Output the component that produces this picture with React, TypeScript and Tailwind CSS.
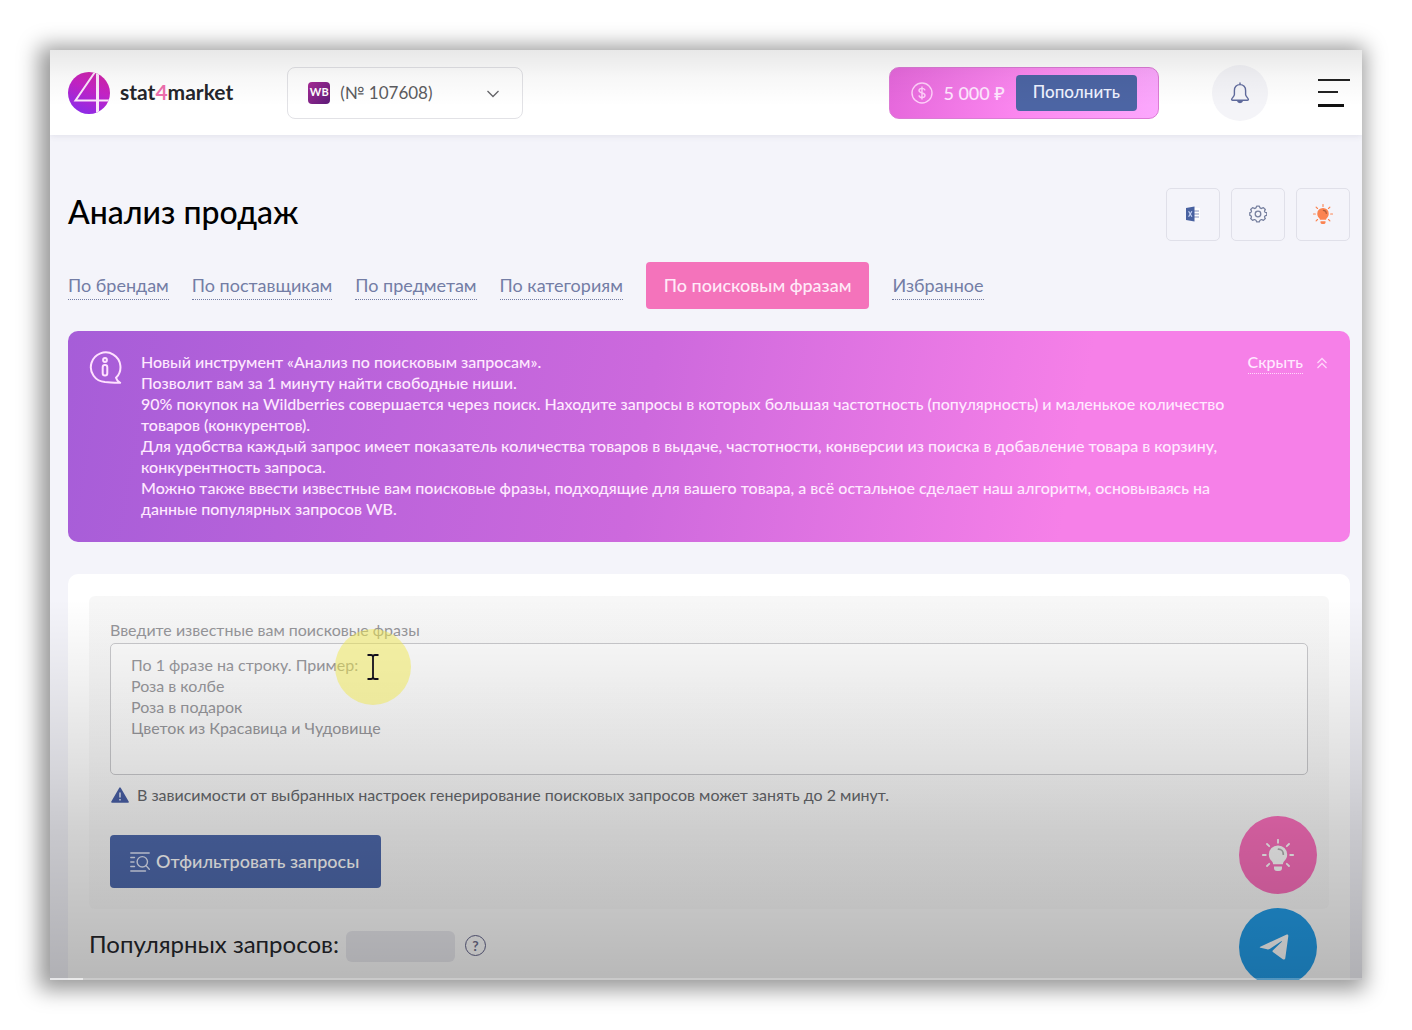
import React from "react";

const tabs = [
  { label: "По брендам" },
  { label: "По поставщикам" },
  { label: "По предметам" },
  { label: "По категориям" },
  { label: "По поисковым фразам", active: true },
  { label: "Избранное" },
];

function Logo() {
  return (
    <svg viewBox="0 0 42 42" className="size-[42px] shrink-0" aria-hidden="true">
      <defs>
        <linearGradient id="logo-fill" x1="0.3" y1="1" x2="0.7" y2="0">
          <stop offset="0" stopColor="#8a2be8" />
          <stop offset="0.6" stopColor="#c423c6" />
          <stop offset="1" stopColor="#cf25a8" />
        </linearGradient>
        <clipPath id="logo-clip">
          <circle cx="21" cy="21" r="21" />
        </clipPath>
      </defs>
      <circle cx="21" cy="21" r="21" fill="url(#logo-fill)" />
      <g clipPath="url(#logo-clip)" fill="none" stroke="#fbe6fb" strokeWidth="2">
        <path d="M42 28.500H7.500L27 0" />
        <path d="M29.500 0v42" strokeWidth="3" />
      </g>
    </svg>
  );
}

function BulbIcon({ className }: { className: string }) {
  return (
    <svg viewBox="0 0 32 32" className={className} aria-hidden="true">
      <path
        d="M16 6.4a9 9 0 0 1 9.200 9c0 3.600-1.800 5.400-3.300 7.200-.700.900-.900 1.700-1 2.700h-9.800c-.1-1-.3-1.800-1-2.700-1.500-1.800-3.300-3.600-3.300-7.200a9 9 0 0 1 9.200-9z"
        fill="currentColor"
      />
      <path d="M12 27.500h8v1.500a3 3 0 0 1-3 3h-2a3 3 0 0 1-3-3z" fill="currentColor" />
      <path d="M16.500 10.200a5 5 0 0 1 4.800 5" fill="none" stroke="#000" strokeOpacity="0.3" strokeWidth="1.800" strokeLinecap="round" />
      <path
        d="M16 .8v3M.8 16h3M28.200 16h3M5 5l2.200 2.200M27 5l-2.200 2.200M5 27l2.200-2.200M27 27l-2.200-2.200"
        stroke="currentColor"
        strokeWidth="1.800"
        strokeLinecap="round"
      />
    </svg>
  );
}

function Header() {
  return (
    <header className="flex h-[85px] items-center bg-white pr-3 pl-[18px] shadow-[0_1px_6px_rgba(90,90,120,0.12)]">
      <a href="#" className="flex items-center gap-[10px] text-[21px] leading-7 font-bold text-[#25262b]">
        <Logo />
        <span className="pb-[2px]">
          stat<span className="text-[#ee6fae]">4</span>market
        </span>
      </a>

      <div className="relative ml-[54px]">
        <select
          aria-label="Магазин"
          className="h-[52px] w-[236px] appearance-none rounded-lg border border-[#e2e2e6] bg-transparent pl-[52px] text-[17px] text-[#5c5c60]"
        >
          <option>(№ 107608)</option>
        </select>
        <span className="pointer-events-none absolute top-[15px] left-[21px] flex size-[22px] items-center justify-center rounded bg-linear-to-br from-[#a82a96] to-[#5d1a78] text-[11px] font-bold text-white">
          WB
        </span>
        <svg viewBox="0 0 12 8" className="pointer-events-none absolute top-[23px] right-[24px] h-2 w-3" fill="none" stroke="#66666a" strokeWidth="1.300" aria-hidden="true">
          <path d="M.5 1 6 6.500 11.500 1" />
        </svg>
      </div>

      <div className="ml-auto flex h-[52px] items-center rounded-[10px] border border-[#dc7bd5] bg-linear-to-r from-[#e668dc] via-[#fc88f0] to-[#fba8fd] pr-[21px] pl-[21px] text-lg font-medium text-[#ffe6ff]">
        <svg viewBox="0 0 22 22" className="mr-[10px] size-[22px]" fill="none" stroke="#ffd0fa" strokeWidth="1.400" aria-hidden="true">
          <circle cx="11" cy="11" r="10" />
          <path d="M14 8.400c-.3-1.300-1.500-2-3-2-1.700 0-3 .8-3 2.200 0 3.100 6 1.700 6 4.700 0 1.400-1.300 2.300-3 2.300-1.600 0-2.800-.8-3-2.200M11 4.500v13" />
        </svg>
        <span className="whitespace-nowrap">5 000 ₽</span>
        <button className="ml-[11px] h-9 rounded bg-[#4c65a4] px-[17px] text-[17px] text-[#eef2ff]">Пополнить</button>
      </div>

      <button aria-label="Уведомления" className="ml-[53px] flex size-14 items-center justify-center rounded-full bg-[#f4f4f8]">
        <svg viewBox="0 0 20 22" className="h-[22px] w-5" fill="none" stroke="#5f6a9c" strokeWidth="1.400" strokeLinejoin="round" aria-hidden="true">
          <path d="M10 2.600c-3.600 0-5.600 2.600-5.600 5.800v4.200c0 1.800-2.800 3.600-2.800 5 0 .5.400.7.900.7h15c.5 0 .9-.2.900-.7 0-1.400-2.800-3.200-2.800-5V8.400c0-3.200-2-5.800-5.600-5.800zM10 .5v2" />
          <path d="M7.500 18.600a2.600 2.600 0 0 0 5 0z" fill="#5f6a9c" />
        </svg>
      </button>

      <button aria-label="Меню" className="ml-[50px] flex h-7 w-8 flex-col items-start justify-between text-black">
        <span className="h-[2px] w-8 bg-[#222]" />
        <span className="h-[2px] w-5 bg-[#222]" />
        <span className="h-[3px] w-[26px] bg-[#111]" />
      </button>
    </header>
  );
}

function ToolButtons() {
  const box = "flex h-[53px] w-[54px] items-center justify-center rounded-[5px] border border-[#e0e0e9] pb-[2px]";
  return (
    <div className="flex gap-[11px]">
      <button aria-label="Экспорт в Excel" className={box}>
        <svg viewBox="0 0 16 16" className="size-4" aria-hidden="true">
          <path d="M8 2h7v12H8z" fill="#fff" />
          <path d="M9 5h5M9 8h5M9 11h5" stroke="#8793bd" strokeWidth="1.200" />
          <path d="M1 2 9.500.5v15L1 14z" fill="#4861a0" />
          <path d="m3.600 5.300 3.300 5.400M6.900 5.300l-3.300 5.400" stroke="#c5d3f5" strokeWidth="1.200" />
        </svg>
      </button>
      <button aria-label="Настройки" className={box}>
        <svg viewBox="0 0 18 18" className="size-[18px]" fill="none" stroke="#77809f" strokeWidth="1.300" strokeLinejoin="round" aria-hidden="true">
          <circle cx="9" cy="9" r="2.800" />
          <path d="M7.700 1.200h2.600q.3 2 1.900 2.300 1 0 2.200-.9l1.900 1.900q-.9 1.200-.7 2.200.5 1 2.200 1v2.600q-1.700 0-2.200 1.100-.2 1 .7 2.100l-1.900 1.900q-1.200-.9-2.200-.7-1.600.4-1.900 2.100H7.700q-.3-1.700-1.900-2.100-1-.2-2.200.7l-1.900-1.900q.9-1.100.7-2.100Q1.900 10.300.8 10.300V7.700q1.100 0 1.600-1 .2-1-.7-2.200l1.900-1.900q1.200.9 2.200.9 1.600-.3 1.900-2.300z" />
        </svg>
      </button>
      <button aria-label="Подсказки" className={box}>
        <BulbIcon className="size-5 text-[#fb8350]" />
      </button>
    </div>
  );
}

function Banner() {
  return (
    <section className="flex items-start rounded-[10px] bg-[linear-gradient(100deg,#a65dd8_0%,#cd69dd_45%,#f680e8_78%,#f680e8_100%)] px-[21px] pt-5 pb-[23px] text-base leading-[21px] font-medium text-[#ffe9ff]">
      <svg viewBox="0 0 33 33" className="size-[33px] shrink-0" fill="none" stroke="#ffe1ff" strokeWidth="2" strokeLinejoin="round" strokeLinecap="round" aria-hidden="true">
        <path d="M27 26.800A14.800 14.800 0 1 0 16 31c5 0 9 1.200 15.200.8-2.200-1.200-3.600-2.700-4.200-5z" />
        <circle cx="16" cy="9" r="1.900" />
        <rect x="13.700" y="14" width="4.600" height="10.500" rx="2.200" />
      </svg>
      <p className="ml-[19px] max-w-[1090px] flex-1">
        Новый инструмент «Анализ по поисковым запросам».
        <br />
        Позволит вам за 1 минуту найти свободные ниши.
        <br />
        90% покупок на Wildberries совершается через поиск. Находите запросы в которых большая частотность (популярность) и маленькое количество товаров (конкурентов).
        <br />
        Для удобства каждый запрос имеет показатель количества товаров в выдаче, частотности, конверсии из поиска в добавление товара в корзину, конкурентность запроса.
        <br />
        Можно также ввести известные вам поисковые фразы, подходящие для вашего товара, а всё остальное сделает наш алгоритм, основываясь на данные популярных запросов WB.
      </p>
      <button className="ml-auto flex items-center gap-[14px]">
        <span className="border-b border-dotted border-[#ffd6fb] pb-px">Скрыть</span>
        <svg viewBox="0 0 10 12" className="mr-[2px] h-3 w-[10px]" fill="none" stroke="#ffd6fb" strokeWidth="1.300" aria-hidden="true">
          <path d="M.5 6 5 1.500 9.500 6M.5 11 5 6.500 9.500 11" />
        </svg>
      </button>
    </section>
  );
}

function SearchPanel() {
  return (
    <section className="mt-8 rounded-t-[10px] bg-white px-[21px] pt-[22px] pb-10">
      <form className="rounded-md bg-linear-to-b from-[#f7f7f7] to-[#fbfbfb] px-[21px] pt-6 pb-[21px]">
        <label htmlFor="phrases" className="block text-base leading-5 text-[#96969a]">
          Введите известные вам поисковые фразы
        </label>
        <textarea
          id="phrases"
          className="mt-[3px] block h-[132px] w-full resize-none rounded-[5px] border border-[#c9c9cc] bg-white/60 px-5 py-[10px] text-base leading-[21px] placeholder:text-[#98989c]"
          placeholder={"По 1 фразе на строку. Пример:\nРоза в колбе\nРоза в подарок\nЦветок из Красавица и Чудовище"}
        />
        <p className="mt-[9px] flex items-center gap-2 text-base leading-[21px] text-[#66686c]">
          <svg viewBox="0 0 18 16" className="ml-[1px] h-4 w-[18px]" aria-hidden="true">
            <path d="M9 1.200 17 15H1z" fill="#4a60a6" stroke="#4a60a6" strokeWidth="1.600" strokeLinejoin="round" />
            <path d="M9 5.500v5M9 12v1.600" stroke="#e6eaf6" strokeWidth="1.500" />
          </svg>
          В зависимости от выбранных настроек генерирование поисковых запросов может занять до 2 минут.
        </p>
        <button type="button" className="mt-[30px] flex h-[53px] items-center gap-[6px] rounded bg-[#4f6aad] pr-[22px] pl-5 text-lg font-medium text-white">
          <svg viewBox="0 0 20 20" className="size-5" fill="none" stroke="#dfe5f7" strokeWidth="1.400" strokeLinecap="round" aria-hidden="true">
            <path d="M.8 1h18.400M.8 5.500h3.700M.8 10h3.200M.8 14.500h3.700M.8 19h14.700" />
            <circle cx="12.300" cy="9.800" r="5.200" />
            <path d="m16 13.600 3.300 3.600" />
          </svg>
          <span className="pb-[2px]">Отфильтровать запросы</span>
        </button>
      </form>
      <div className="mt-4 flex items-center text-2xl leading-8 text-[#26272c]">
        <h2>Популярных запросов:</h2>
        <span className="mt-[6px] ml-[7px] h-[31px] w-[109px] rounded-md bg-[#ebebf0]" />
        <button aria-label="Справка" className="mt-1 ml-[10px] flex size-[21px] items-center justify-center rounded-full border border-[#62638a] text-sm font-bold text-[#72738f]">
          ?
        </button>
      </div>
    </section>
  );
}

export default function App() {
  return (
    <div className="h-screen bg-white p-[50px] font-['Lato','Noto_Sans',sans-serif]">
      <div className="relative h-full overflow-hidden bg-[#f4f4fa] shadow-[-4px_3px_20px_7px_rgba(0,0,0,0.4)]">
        <Header />
        <main className="pr-3 pl-[18px]">
          <div className="flex items-start justify-between pt-[53px]">
            <h1 className="text-[32px] leading-[48px] font-medium text-black">Анализ продаж</h1>
            <ToolButtons />
          </div>
          <nav className="mt-[21px] mb-[22px] flex items-center gap-[23px] text-lg leading-7">
            {tabs.map((tab) =>
              tab.active ? (
                <a key={tab.label} href="#" className="flex h-[47px] items-center rounded bg-[#f473bb] px-[18px] pb-[2px] font-medium text-[#ffeaf8]">
                  {tab.label}
                </a>
              ) : (
                <a key={tab.label} href="#" className="border-b border-dotted border-[#747da3] text-[#737da5]">
                  {tab.label}
                </a>
              ),
            )}
          </nav>
          <Banner />
          <SearchPanel />
        </main>

        <div className="absolute right-[45px] -bottom-[6px] flex flex-col gap-[14px] text-white">
          <button aria-label="Идеи" className="flex size-[78px] items-center justify-center rounded-full bg-[#fb70bd]">
            <BulbIcon className="size-8" />
          </button>
          <a href="#" aria-label="Telegram" className="flex size-[78px] items-center justify-center rounded-full bg-[#239eea]">
            <svg viewBox="0 0 30 26" className="mr-2 h-[26px] w-[30px]" fill="currentColor" aria-hidden="true">
              <path d="M1.300 12.700 27.200.7c1.400-.6 2.300.1 2.100 1.600l-3 21.800c-.2 1.500-1.300 1.900-2.500 1.100l-9.600-6.900c-1-.7-1-1.300-.2-2.100l8.800-8.400c.6-.6-.1-.9-.9-.4L10.600 15c-.8.500-1.600.6-2.500.3l-6.600-1.500c-1-.3-1-.7-.2-1.100z" />
            </svg>
          </a>
        </div>

        <div className="pointer-events-none absolute inset-0 bg-[linear-gradient(to_bottom,rgba(0,0,0,0.09)_0%,rgba(0,0,0,0.03)_3%,rgba(0,0,0,0)_6%,rgba(0,0,0,0)_59%,rgba(0,0,0,0.05)_67%,rgba(0,0,0,0.12)_77%,rgba(0,0,0,0.18)_84%,rgba(0,0,0,0.28)_100%)]" />
        <div className="pointer-events-none absolute top-[579px] left-[285px] flex size-[76px] items-center justify-center rounded-full bg-[#f0e84f]/50">
          <svg viewBox="0 0 12 26" className="h-[26px] w-3" fill="none" stroke="#120f1c" strokeWidth="1.800" aria-hidden="true">
            <path d="M.5 1H4q2 0 2 2 0-2 2-2h3.500M6 2.500v21M.5 25H4q2 0 2-2 0 2 2 2h3.500" />
          </svg>
        </div>
        <div className="pointer-events-none absolute inset-x-0 bottom-0 h-[2px] bg-white/25">
          <div className="h-full w-[33px] bg-white/60" />
        </div>
      </div>
    </div>
  );
}
